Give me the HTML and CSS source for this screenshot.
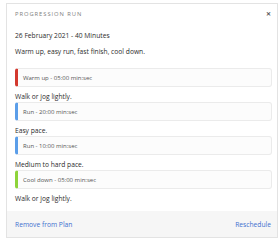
FILE: index.html
```html
<!DOCTYPE html>
<html>
<head>
<meta charset="utf-8">
<link rel="stylesheet" href="styles.css">
</head>
<body>
<div class="card">
  <div class="header">
    <span class="title">PROGRESSION RUN</span>
    <span class="close">&#x2715;</span>
  </div>
  <div class="body">
    <div class="date">26 February 2021 - 40 Minutes</div>
    <div class="summary">Warm up, easy run, fast finish, cool down.</div>
    <div class="step red">Warm up - 05:00 min:sec</div>
    <div class="note">Walk or jog lightly.</div>
    <div class="step blue">Run - 20:00 min:sec</div>
    <div class="note">Easy pace.</div>
    <div class="step blue">Run - 10:00 min:sec</div>
    <div class="note">Medium to hard pace.</div>
    <div class="step green">Cool down - 05:00 min:sec</div>
    <div class="note">Walk or jog lightly.</div>
  </div>
  <div class="footer">
    <a class="link">Remove from Plan</a>
    <a class="link">Reschedule</a>
  </div>
</div>
</body>
</html>
```
FILE: styles.css
```css
html, body {
  margin: 0;
  padding: 0;
  background: #ffffff;
}
body {
  font-family: "Open Sans", "Noto Sans", sans-serif;
  color: #2b2b2b;
  overflow: hidden;
  height: 240px;
}
.card {
  margin: 3px 0 0 6px;
  width: 272px;
  height: 235px;
  border: 1px solid #e3e3e3;
  background: #fff;
  display: flex;
  flex-direction: column;
  box-sizing: border-box;
}
.header {
  display: flex;
  justify-content: space-between;
  align-items: center;
  padding: 0 6px 0 8px;
  height: 20px;
  flex: none;
}
.title {
  font-size: 5.8px;
  letter-spacing: 0.95px;
  color: #808080;
}
.close {
  font-size: 6px;
  font-weight: bold;
  color: #555;
}
.body {
  padding: 6px 5px 0 8px;
  flex: 1;
}
.date {
  font-size: 6.7px;
  line-height: 11px;
  margin-bottom: 5px;
}
.summary {
  font-size: 6.7px;
  line-height: 11px;
  margin-bottom: 11px;
}
.note {
  font-size: 6.7px;
  line-height: 11px;
  padding-top: 4px;
}
.step {
  height: 19px;
  box-sizing: border-box;
  border: 1px solid #ebebeb;
  border-left: 3px solid;
  border-radius: 3px;
  background: #fcfcfc;
  font-size: 6px;
  color: #555;
  display: flex;
  align-items: center;
  padding-left: 5px;
}
.step.red { border-left-color: #d3392f; }
.step.blue { border-left-color: #5b9ee9; }
.step.green { border-left-color: #8ed43a; }
.footer {
  background: #f6f6f6;
  height: 26px;
  flex: none;
  display: flex;
  justify-content: space-between;
  align-items: center;
  padding: 0 6px 0 8px;
}
.link {
  font-size: 6.7px;
  color: #3d6fcf;
}
```
